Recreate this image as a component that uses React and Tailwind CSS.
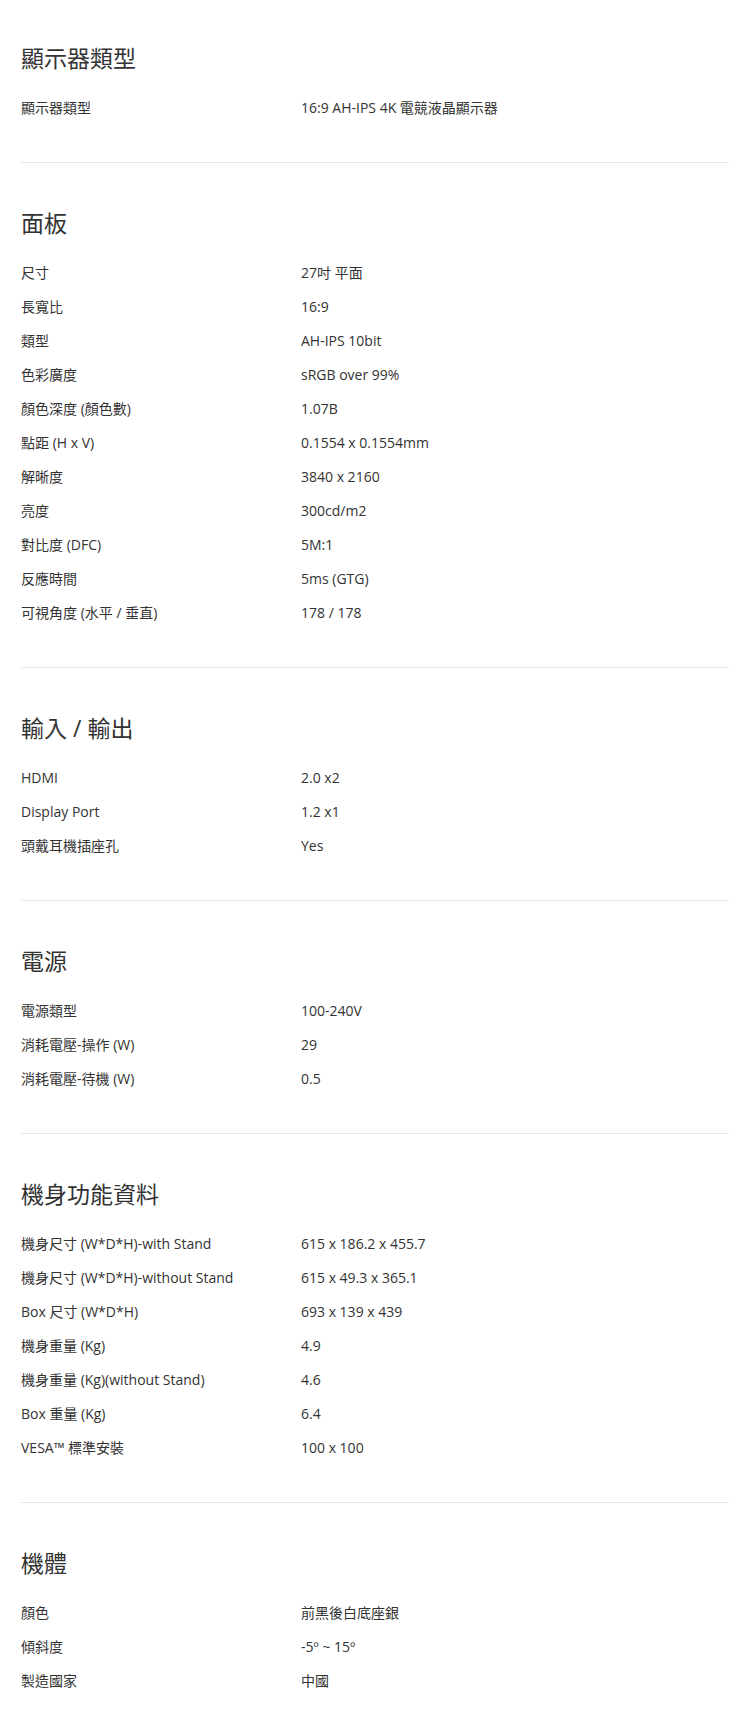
import React from "react";

const specs = [
  {
    title: "顯示器類型",
    rows: [["顯示器類型", "16:9 AH-IPS 4K 電競液晶顯示器"]],
  },
  {
    title: "面板",
    rows: [
      ["尺寸", "27吋 平面"],
      ["長寬比", "16:9"],
      ["類型", "AH-IPS 10bit"],
      ["色彩廣度", "sRGB over 99%"],
      ["顏色深度 (顏色數)", "1.07B"],
      ["點距 (H x V)", "0.1554 x 0.1554mm"],
      ["解晰度", "3840 x 2160"],
      ["亮度", "300cd/m2"],
      ["對比度 (DFC)", "5M:1"],
      ["反應時間", "5ms (GTG)"],
      ["可視角度 (水平 / 垂直)", "178 / 178"],
    ],
  },
  {
    title: "輸入 / 輸出",
    rows: [
      ["HDMI", "2.0 x2"],
      ["Display Port", "1.2 x1"],
      ["頭戴耳機插座孔", "Yes"],
    ],
  },
  {
    title: "電源",
    rows: [
      ["電源類型", "100-240V"],
      ["消耗電壓-操作 (W)", "29"],
      ["消耗電壓-待機 (W)", "0.5"],
    ],
  },
  {
    title: "機身功能資料",
    rows: [
      ["機身尺寸 (W*D*H)-with Stand", "615 x 186.2 x 455.7"],
      ["機身尺寸 (W*D*H)-without Stand", "615 x 49.3 x 365.1"],
      ["Box 尺寸 (W*D*H)", "693 x 139 x 439"],
      ["機身重量 (Kg)", "4.9"],
      ["機身重量 (Kg)(without Stand)", "4.6"],
      ["Box 重量 (Kg)", "6.4"],
      ["VESA™ 標準安裝", "100 x 100"],
    ],
  },
  {
    title: "機體",
    rows: [
      ["顏色", "前黑後白底座銀"],
      ["傾斜度", "-5º ~ 15º"],
      ["製造國家", "中國"],
    ],
  },
];

const SpecSection = ({ section, first, last }) => (
  <section
    className={`${first ? "pt-[42px]" : "pt-[44px]"} ${
      last ? "" : "pb-[38px] border-b border-[#e5e5e5]"
    }`}
  >
    <h2 className="h-[32px] leading-[32px] text-[23px] font-normal text-[#333] mb-[16px]">
      {section.title}
    </h2>

    {section.rows.map(([label, value], i) => (
      <div key={i} className="flex h-[34px] items-center text-[14px] text-[#333]">
        <div className="w-[280px] shrink-0">{label}</div>
        <div>{value}</div>
      </div>
    ))}
  </section>
);

const App = () => {
  return (
    <div
      className="bg-white min-h-[1711px] px-[21px]"
      style={{ fontFamily: '"Open Sans", "Noto Sans CJK TC", sans-serif' }}
    >
      {specs.map((section, index) => (
        <SpecSection
          key={section.title}
          section={section}
          first={index === 0}
          last={index === specs.length - 1}
        />
      ))}
    </div>
  );
};

export default App;
